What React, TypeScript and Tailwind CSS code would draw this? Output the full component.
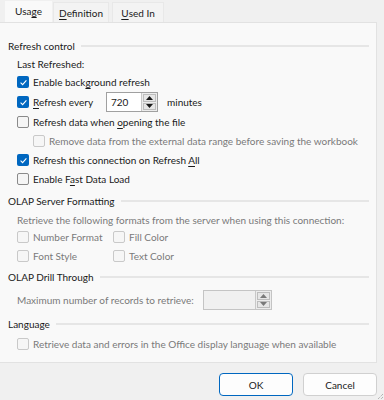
import React from "react";

type BoxState = "on" | "off" | "dis";

function Box({ state }: { state: BoxState }) {
  if (state === "on") {
    return (
      <span className="flex h-[12px] w-[12px] shrink-0 items-center justify-center rounded-[2px] bg-[#0067c0]">
        <svg width="9" height="9" viewBox="0 0 9 9" fill="none">
          <path d="M1.6 4.7 L3.6 6.6 L7.4 2.4" stroke="white" strokeWidth="1.1" />
        </svg>
      </span>
    );
  }
  return (
    <span
      className={`h-[12px] w-[12px] shrink-0 rounded-[2px] border ${
        state === "dis" ? "border-[#c9c9c9] bg-[#f6f6f6]" : "border-[#8a8a8a] bg-[#f5f5f5]"
      }`}
    />
  );
}

function Check({
  state,
  children,
  className = "",
}: {
  state: BoxState;
  children: React.ReactNode;
  className?: string;
}) {
  return (
    <div className={`flex items-center gap-[4px] whitespace-nowrap ${className}`}>
      <Box state={state} />
      <span className={state === "dis" ? "text-[#7a7a7a]" : ""}>{children}</span>
    </div>
  );
}

function Section({ title, className = "" }: { title: string; className?: string }) {
  return (
    <div className={`flex items-center gap-[6px] whitespace-nowrap ${className}`}>
      <span>{title}</span>
      <div className="h-[2px] flex-1 bg-[#e6e6e6]" />
    </div>
  );
}

function Spin({ value, disabled }: { value?: string; disabled?: boolean }) {
  const arrow = disabled ? "#7a7a7a" : "#1a1a1a";
  return (
    <div
      className={`flex h-[20px] items-stretch border ${
        disabled ? "border-[#c4c4c4] bg-[#f0f0f0]" : "border-[#a0a0a0] bg-white"
      }`}
    >
      <div className={`flex items-center pl-[4px] ${disabled ? "w-[51px]" : "w-[34px]"}`}>{value}</div>
      <div className="flex w-[16px] flex-col gap-px border-l border-[#c8c8c8] bg-[#ececec] p-px">
        <div className="flex flex-1 items-center justify-center border border-[#bdbdbd] bg-[#e6e6e6]">
          <svg width="7" height="4" viewBox="0 0 7 4">
            <path d="M0 4 L3.5 0 L7 4 Z" fill={arrow} />
          </svg>
        </div>
        <div className="flex flex-1 items-center justify-center border border-[#bdbdbd] bg-[#e6e6e6]">
          <svg width="7" height="4" viewBox="0 0 7 4">
            <path d="M0 0 L3.5 4 L7 0 Z" fill={arrow} />
          </svg>
        </div>
      </div>
    </div>
  );
}

const U = ({ children }: { children: React.ReactNode }) => (
  <span className="underline decoration-1 underline-offset-2">{children}</span>
);

export default function App() {
  return (
    <div className="relative h-[400px] w-[384px] overflow-hidden bg-[#f0f0f0] font-['Lato',sans-serif] text-[10px] leading-none text-[#1a1a1a]">
      {/* tabs */}
      <div className="flex h-[22px] items-end gap-[1px] whitespace-nowrap pl-[5px] pt-[2px]">
        <div className="flex h-[21px] w-[47px] items-center justify-center bg-[#f9f9f9] pb-[1px]">
          Usa<U>g</U>e
        </div>
        <div className="flex h-[20px] w-[56px] items-center justify-center border border-b-0 border-[#e8e8e8] bg-[#f3f3f3]">
          <U>D</U>efinition
        </div>
        <div className="ml-[2px] flex h-[20px] w-[52px] items-center justify-center border border-b-0 border-[#e8e8e8] bg-[#f3f3f3]">
          <U>U</U>sed In
        </div>
      </div>

      {/* panel */}
      <div className="flex h-[341px] w-[377px] flex-col border border-l-0 border-[#e2e2e2] bg-[#f9f9f9] pl-[8px] pr-[7px] pt-[14px]">
        <Section title="Refresh control" className="h-[18px]" />
        <div className="flex h-[18px] items-center pl-[9px]">Last Refreshed:</div>
        <Check state="on" className="h-[18px] pl-[9px]">
          Enable back<U>g</U>round refresh
        </Check>
        <div className="flex h-[22px] items-center whitespace-nowrap pl-[9px]">
          <Check state="on" className="w-[89px]">
            <U>R</U>efresh every
          </Check>
          <Spin value="720" />
          <span className="ml-[9px]">minutes</span>
        </div>
        <Check state="off" className="h-[18px] pl-[9px]">
          Refresh data when <U>o</U>pening the file
        </Check>
        <Check state="dis" className="h-[20px] pl-[25px]">
          Remove data from the external data range before saving the workbook
        </Check>
        <Check state="on" className="h-[18px] pl-[9px]">
          Refresh this connection on Refresh <U>A</U>ll
        </Check>
        <Check state="off" className="h-[20px] pl-[9px]">
          Enable F<U>a</U>st Data Load
        </Check>

        <Section title="OLAP Server Formatting" className="h-[24px]" />
        <div className="flex h-[14px] items-center whitespace-nowrap pl-[9px] text-[#7a7a7a]">
          Retrieve the following formats from the server when using this connection:
        </div>
        <div className="flex h-[20px] items-center pl-[9px]">
          <Check state="dis" className="w-[96px]">
            Number Format
          </Check>
          <Check state="dis">Fill Color</Check>
        </div>
        <div className="flex h-[18px] items-center pl-[9px]">
          <Check state="dis" className="w-[96px]">
            Font Style
          </Check>
          <Check state="dis">Text Color</Check>
        </div>

        <Section title="OLAP Drill Through" className="h-[24px]" />
        <div className="flex h-[22px] items-center whitespace-nowrap pl-[9px]">
          <span className="w-[186px] text-[#7a7a7a]">Maximum number of records to retrieve:</span>
          <Spin disabled />
        </div>

        <Section title="Language" className="h-[26px]" />
        <Check state="dis" className="h-[14px] pl-[9px]">
          Retrieve data and errors in the Office display language when available
        </Check>
      </div>

      {/* buttons */}
      <div className="flex justify-end gap-[10px] pr-[7px] pt-[10px]">
        <button className="h-[23px] w-[74px] rounded-[4px] border border-[#0067c0] bg-[#fdfdfd] text-[10px] text-[#1a1a1a]">
          OK
        </button>
        <button className="h-[23px] w-[74px] rounded-[4px] border border-[#d0d0d0] bg-[#fdfdfd] text-[10px] text-[#1a1a1a]">
          Cancel
        </button>
      </div>

      {/* size grip */}
      <svg className="absolute bottom-0 right-0" width="8" height="8" viewBox="0 0 8 8">
        <path d="M7 2 L2 7 M7 5 L5 7" stroke="#9a9a9a" strokeWidth="1" strokeDasharray="1 1" />
      </svg>
    </div>
  );
}
